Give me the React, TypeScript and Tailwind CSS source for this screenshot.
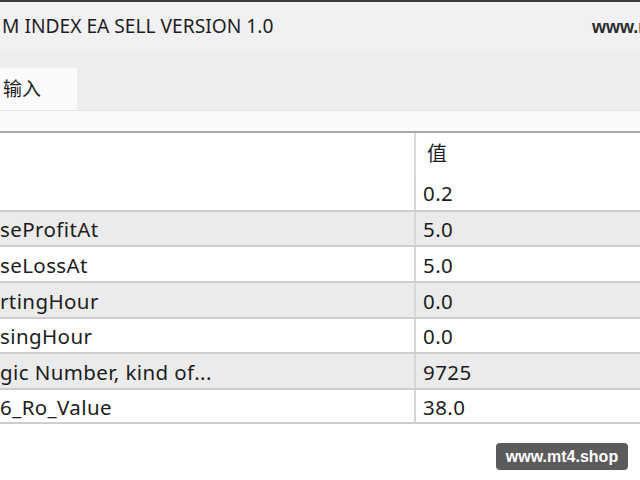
import React from 'react';

type Param = { name: string; value: string };

const params: Param[] = [
  { name: '', value: '0.2' },
  { name: 'seProfitAt', value: '5.0' },
  { name: 'seLossAt', value: '5.0' },
  { name: 'rtingHour', value: '0.0' },
  { name: 'singHour', value: '0.0' },
  { name: 'gic Number, kind of...', value: '9725' },
  { name: '6_Ro_Value', value: '38.0' },
];

const ui = "font-['Noto_Sans','Noto_Sans_CJK_SC',sans-serif]";

const App: React.FC = () => {
  return (
    <div className={`relative w-[640px] h-[480px] overflow-hidden bg-white text-[#1c1c1c] ${ui}`}>
      <div className="h-[2px] bg-[#3c3c3c]" />

      {/* title bar */}
      <div className="flex h-[48px] items-center bg-[#f1f1f3]">
        <div className="pl-[2px] text-[19.2px] leading-none text-[#1e1e1e] whitespace-nowrap">
          M INDEX EA SELL VERSION 1.0
        </div>
        <div className="flex-1" />
        <div className="w-[48px] shrink-0 whitespace-nowrap pt-[2px] font-['Liberation_Sans',sans-serif] text-[18px] font-bold leading-none text-[#2a2a2a]">
          www.m
        </div>
      </div>

      {/* tabs */}
      <div className="flex h-[60px] items-end bg-[#eeeeef]">
        <div className="flex h-[42px] w-[77px] items-center bg-[#fafafa] pl-[3px] text-[19px] leading-none">
          输入
        </div>
      </div>
      <div className="h-[21px] bg-[#fafafa] border-t border-[#e4e4e4]" />
      <div className="h-[2px] bg-[#a9a9a9]" />

      {/* parameter table */}
      <div className="flex flex-col">
        <div className="flex h-[41px] bg-white">
          <div className="w-[416px] shrink-0 border-r-2 border-[#dadada]" />
          <div className="flex items-center pl-[11px] text-[20px] leading-none">值</div>
        </div>
        {params.map((p, i) => (
          <div
            key={i}
            className={`flex h-[35.7px] ${i > 0 ? 'border-t-2 border-[#cdcdcd]' : ''} ${i % 2 === 1 ? 'bg-[#ebebeb]' : 'bg-white'} ${i === params.length - 1 ? 'border-b-2' : ''}`}
          >
            <div className="flex w-[416px] shrink-0 items-center whitespace-nowrap border-r-2 border-[#d6d6d6] pt-[2px] text-[20.5px] tracking-[0.4px] leading-none">
              {p.name}
            </div>
            <div className="flex items-center pl-[7px] pt-[2px] text-[20.5px] tracking-[0.4px] leading-none">{p.value}</div>
          </div>
        ))}
      </div>

      {/* watermark */}
      <div className="absolute left-[496px] top-[443px] flex h-[27px] w-[132px] items-center justify-center rounded-[4px] bg-[#5b5b5b] font-['Liberation_Sans',sans-serif] text-[16px] font-bold leading-none text-white">
        www.mt4.shop
      </div>
    </div>
  );
};

export default App;
